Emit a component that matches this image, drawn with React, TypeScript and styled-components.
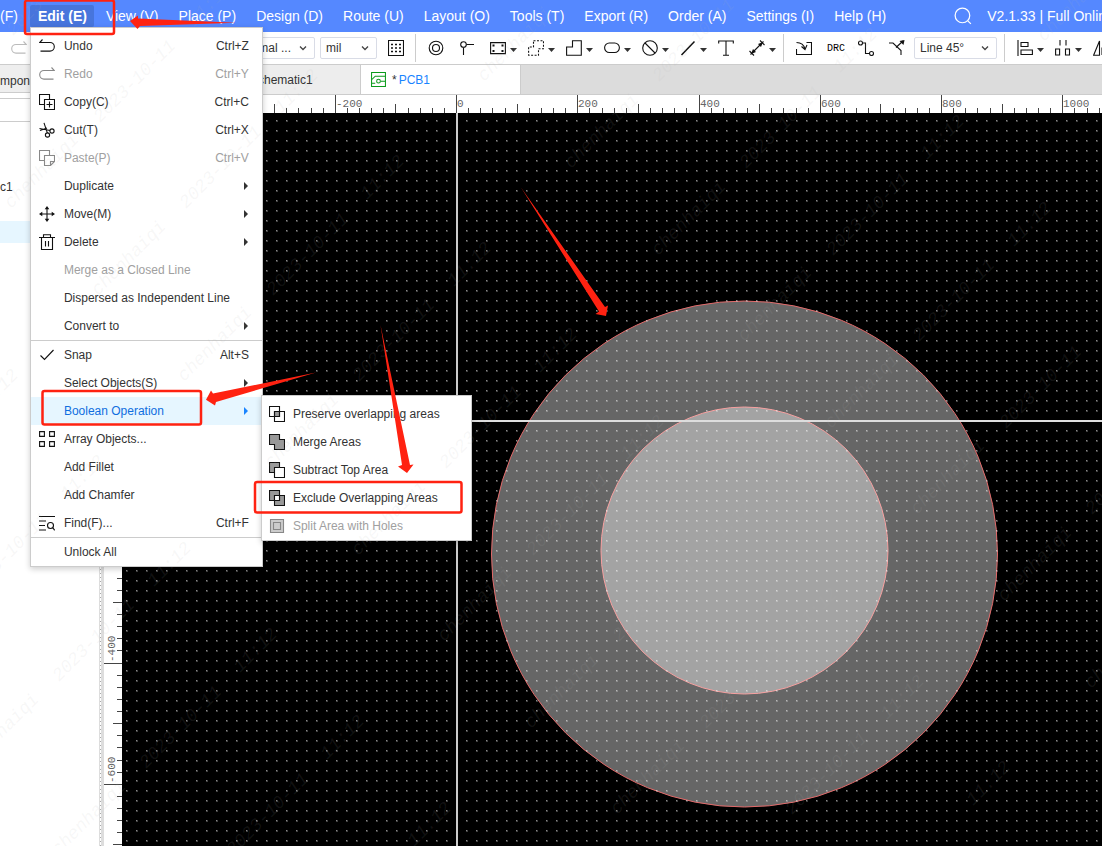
import React from 'react';
import styled, { createGlobalStyle } from 'styled-components';

const GlobalStyle = createGlobalStyle`
  * { box-sizing: border-box; }
  body {
    margin: 0;
    background: #fff;
    color: #333;
    font: 12px/16px "Liberation Sans", Arial, sans-serif;
  }
  button, select, input { font: inherit; color: inherit; }
  button { border: 0; background: none; padding: 0; cursor: pointer; }
  ul { list-style: none; margin: 0; padding: 0; }
`;

const RED = '#ff2211';

const Page = styled.div`
  position: relative;
  display: flex;
  flex-direction: column;
  height: 100vh;
  overflow: hidden;
`;

const Header = styled.header`
  display: flex;
  align-items: center;
  flex: none;
  height: 32px;
  background: #5588ff;
  color: #fff;
  font-size: 14px;
  white-space: nowrap;
`;

const MenuBar = styled.nav`
  display: flex;
  flex: none;
  gap: 4px;
`;

const MenuSlot = styled.div`
  position: relative;
  display: flex;
  align-items: center;
  height: 32px;
`;

const MenuButton = styled.button<{ $active?: boolean; $cut?: boolean }>`
  height: 22px;
  padding: 0 ${p => (p.$active ? '7px' : '8px')} 0 ${p => (p.$cut ? '0' : '8px')};
  border-radius: 2px;
  font-weight: ${p => (p.$active ? 700 : 400)};
  background: ${p => (p.$active ? '#4775dc' : 'transparent')};
`;

const HeaderInfo = styled.div`
  display: flex;
  align-items: center;
  gap: 15px;
  margin-left: 60px;
`;

const Toolbar = styled.div`
  display: flex;
  align-items: center;
  flex: none;
  height: 33px;
  border-bottom: 1px solid #ccc;
  background: #fff;
`;

const HistoryTools = styled.div`
  display: flex;
  flex: none;
  width: 232px;
  padding-left: 4px;
`;

const Tool = styled.button<{ $caret?: boolean }>`
  display: flex;
  align-items: center;
  flex: none;
  gap: 4px;
  height: 24px;
  width: ${p => (p.$caret ? '38px' : '31px')};
  padding-left: 7px;
`;

const Divider = styled.span`
  flex: none;
  width: 1px;
  height: 28px;
  margin: 0 5px 0 3px;
  background: #ccc;
`;

const SelectBox = styled.div<{ $width: number }>`
  display: flex;
  align-items: center;
  position: relative;
  flex: none;
  width: ${p => p.$width}px;
  margin: 0 4px 0 1px;
  svg { position: absolute; right: 8px; pointer-events: none; }
  select {
    width: 100%;
    height: 22px;
    padding: 0 5px;
    border: 1px solid #d9dce6;
    border-radius: 2px;
    background: #fff;
    appearance: none;
  }
`;

const Body = styled.div`
  display: flex;
  flex: 1;
  min-height: 0;
`;

const SidePanel = styled.aside`
  flex: none;
  width: 99px;
  overflow: hidden;
`;

const PanelTab = styled.button`
  display: block;
  width: 100%;
  height: 28px;
  padding-top: 4px;
  border-bottom: 1px solid #ccc;
  background: #eee;
  text-align: left;
`;

const PanelFilter = styled.input`
  display: block;
  width: 100%;
  height: 24px;
  margin: 5px 0 54px;
  border: solid #ccc;
  border-width: 1px 0;
  outline: 0;
`;

const TreeRow = styled.li<{ $selected?: boolean }>`
  height: 22px;
  margin-bottom: 23px;
  line-height: 22px;
  background: ${p => (p.$selected ? '#e6f6ff' : 'transparent')};
`;

const Splitter = styled.div`
  flex: none;
  width: 5px;
  background: #ddd;
  border-left: 1px solid #ddd;
  background-image: repeating-linear-gradient(#aaa 0 1px, #fff 1px 4px);
  background-size: 1px 100%;
  background-repeat: no-repeat;
`;

const Editor = styled.main`
  display: flex;
  flex-direction: column;
  flex: 1;
  min-width: 0;
`;

const TabBar = styled.div`
  display: flex;
  flex: none;
  height: 30px;
  padding-left: 97px;
  border-bottom: 1px solid #ccc;
  background: #dcdcdc;
`;

const Tab = styled.button<{ $active?: boolean }>`
  display: flex;
  align-items: center;
  gap: 6px;
  width: 160px;
  padding-left: 10px;
  border-right: 1px solid #ccc;
  background: ${p => (p.$active ? '#fff' : '#ededed')};
  em { margin-left: 2px; font-style: normal; color: #1a84ff; }
`;

const Board = styled.div`
  display: grid;
  grid-template: 18px 1fr / 18px 1fr;
  flex: 1;
  min-height: 0;
  background: #fff;
  svg { display: block; width: 100%; height: 100%; min-height: 0; overflow: hidden; }
  text { font: 11px "Liberation Mono", monospace; fill: #666; }
`;

const MenuPanel = styled.ul<{ $sub?: boolean }>`
  position: absolute;
  z-index: 2;
  left: ${p => (p.$sub ? '230px' : '0')};
  top: ${p => (p.$sub ? '-2px' : '27px')};
  width: ${p => (p.$sub ? '211px' : '233px')};
  padding: 4px 0 0;
  border: 1px solid #ccc;
  background: #fff;
  color: #333;
  font-size: 12px;
  font-weight: 400;
  box-shadow: 0 2px 6px rgba(0, 0, 0, 0.2);
`;

const MenuEntry = styled.li<{ $divided?: boolean }>`
  position: relative;
  border-top: ${p => (p.$divided ? '1px solid #ccc' : '0')};
`;

const MenuRow = styled.button<{ $muted?: boolean; $active?: boolean; $sub?: boolean }>`
  display: grid;
  grid-template-columns: 16px 1fr auto;
  align-items: center;
  column-gap: ${p => (p.$sub ? '8px' : '9px')};
  width: 100%;
  height: 28px;
  padding: 0 13px 0 ${p => (p.$sub ? '7px' : '8px')};
  text-align: left;
  white-space: nowrap;
  color: ${p => (p.$muted ? '#a0a0a0' : p.$active ? '#0f6ee0' : '#333')};
  background: ${p => (p.$active ? '#e6f6ff' : 'transparent')};
`;

const Overlay = styled.svg`
  position: absolute;
  z-index: 5;
  inset: 0;
  width: 100%;
  height: 100%;
  pointer-events: none;
`;

const Stamp = styled.text`
  font: italic 18px "Liberation Mono", monospace;
  fill: rgba(180, 180, 180, 0.1);
`;

/* ---------- icons ---------- */

function Icon({ children, color = '#111', size = 16 }: { children: React.ReactNode; color?: string; size?: number }) {
  return (
    <svg width={size} height={size} viewBox="0 0 16 16" fill="none" stroke={color} strokeWidth="1.1" aria-hidden="true">
      {children}
    </svg>
  );
}

const Caret = () => (
  <svg width="7" height="16" viewBox="0 0 7 16" aria-hidden="true"><path d="M0 8h7l-3.500 4z" fill="#333" /></svg>
);

const Chevron = () => (
  <svg width="8" height="8" viewBox="0 0 8 8" fill="none" stroke="#444" strokeWidth="1.300" aria-hidden="true"><path d="M1 2.500l3 3 3-3" /></svg>
);

const SubArrow = ({ active }: { active?: boolean }) => (
  <svg width="6" height="8" viewBox="0 0 6 8" aria-hidden="true"><path d="M1 0l4 4-4 4z" fill={active ? '#1a84ff' : '#333'} /></svg>
);

const icons: Record<string, React.ReactNode> = {
  undo: <path d="M3.500 1.500L.7 4.500H11a4.300 4.300 0 0 1 0 8.600H1.500" />,
  redo: <path d="M12.500 1.500l2.800 3H5a4.300 4.300 0 0 0 0 8.600h9.500" />,
  copy: <path d="M5 10.500H.5V.5h10V5M5.500 5.500h10v10h-10zM10.500 7.500v6M7.500 10.500h6" />,
  cut: <><path d="M.5 6.500l10.500 2M5 .8l3.400 10.400M1 8.500l7-2.500" /><circle cx="13" cy="9" r="2.100" /><circle cx="8.500" cy="13" r="2.100" /></>,
  paste: <path d="M5 10.500H.5V.5h10V5M5.500 5.500h10v6l-4 4h-6zM11.500 15v-3.500h3.500" />,
  move: <><path d="M8 2v12M2 8h12" /><path d="M8 0l2.300 3.300H5.700zM8 16l2.300-3.300H5.700zM0 8l3.300-2.300v4.600zM16 8l-3.300-2.300v4.600z" fill="#111" stroke="none" /></>,
  trash: <path d="M0 3.500h16M4.500 3V.7h7V3M2.500 3.500v12h11v-12M6.500 7v5.500M9.500 7v5.500" />,
  check: <path d="M1.500 8.500l4 4 9-9.500" />,
  array: <path d="M.6.6h4.800v4.800H.6zM10.600.6h4.800v4.800h-4.800zM.6 10.600h4.800v4.800H.6zM10.600 10.600h4.800v4.800h-4.800z" />,
  find: <><path d="M0 1.500h16M0 6h7M0 10.500h6M0 15h7" /><circle cx="11.500" cy="10.500" r="3" /><path d="M13.700 12.700l2 2.600" /></>,
  preserve: <><path d="M5.500 5.500h5v5h-5z" fill="#999" /><path d="M.5.5h10v10H.5zM5.500 5.500h10v10h-10z" /></>,
  merge: <path d="M.5.5h10v5h5v10h-10v-5h-5z" fill="#999" />,
  subtract: <><path d="M.5.5h10v10H.5z" fill="#999" /><path d="M5.500 5.500h10v10h-10z" fill="#fff" /></>,
  exclude: <><path d="M.5.5h10v10H.5zM5.500 5.500h10v10h-10z" fill="#999" /><path d="M5.500 5.500h5v5h-5z" fill="#fff" /></>,
  split: <><path d="M1.500 1.500h13v13h-13z" fill="#ccc" /><path d="M4.500 4.500h7v7h-7z" /></>,
  grid: <><path d="M.5.5h15v15H.5z" /><path d="M3 4.500h10M3 8h10M3 11.500h10" strokeWidth="1.500" strokeDasharray="2 2" /></>,
  pad: <><circle cx="8" cy="8" r="6.800" /><circle cx="8" cy="8" r="3.500" /></>,
  via: <><circle cx="4.500" cy="4.500" r="2.800" /><path d="M7.500 4.500H15M4.500 7.500V15" /></>,
  rect: <><path d="M.6 2.600h14.800v11H.6z" /><path d="M2.500 4.500h2v2h-2zM11.500 4.500h2v2h-2zM2.500 10h2v2h-2zM11.500 10h2v2h-2z" fill="#111" stroke="none" /></>,
  region: <path d="M5.500.7h10v8h-5v6.600H.6V7h4.900z" strokeDasharray="2 1.500" />,
  poly: <path d="M6.500.7h8.800v14.600H.6V7h5.900z" />,
  oval: <rect x=".6" y="3" width="14.800" height="9.500" rx="4.700" />,
  ban: <><circle cx="8" cy="8" r="7.300" /><path d="M3 3l10 10" /></>,
  line: <path d="M1.500 15L14.500 1.500" strokeWidth="1.500" />,
  text: <path d="M.7 3.500V1h14.600v2.500M8 1v14M5 15.300h6" />,
  measure: <><path d="M1.500 14.500l13-13M11 .5l4.500 4.500M.5 11l4.500 4.500" /><path d="M14 2l-5 2 3 3zM2 14l5-2-3-3z" fill="#111" stroke="none" /></>,
  importIcon: <><path d="M10.500 2.500h5v12H.5V9" /><path d="M.5 2.500c5 0 7.500 2.500 8.500 6.500M5.500 6.500L9 9.500l2-4.500" /></>,
  route: <><circle cx="2.500" cy="3" r="2" /><circle cx="13.500" cy="13.500" r="2" /><path d="M4.500 3h3v10.500h4" /></>,
  fanout: <><path d="M0 3h4l8 7.500V15M7 7.500L14 1" /><path d="M15.500 0l-1 5-4-4z" fill="#111" stroke="none" /></>,
  alignLeft: <path d="M1 0v16M4 2.500h7v4H4zM4 10h11.400v4.500H4z" />,
  distribute: <path d="M5 0v5.500M11 0v5.500M.6 9h4v6H.6zM10.500 9h4v6h-4z" />,
  mirror: <path d="M6.500 1v14.300H.6zM9 15V8h5" />,
};

function ToolIcon({ name, label, caret, color }: { name: string; label: string; caret?: boolean; color?: string }) {
  return (
    <Tool $caret={caret} aria-label={label}>
      <Icon color={color}>{icons[name]}</Icon>
      {caret && <Caret />}
    </Tool>
  );
}

const DrcLabel = styled.span`
  font: 10px "Liberation Mono", monospace;
  color: #000;
`;

function Choice({ label, value, width }: { label: string; value: string; width: number }) {
  return (
    <SelectBox $width={width}>
      <select aria-label={label} defaultValue={value}><option>{value}</option></select>
      <Chevron />
    </SelectBox>
  );
}

/* ---------- menus ---------- */

type Item = {
  label: string;
  icon?: string;
  keys?: string;
  sub?: boolean;
  muted?: boolean;
  active?: boolean;
  divided?: boolean;
};

const editItems: Item[] = [
  { label: 'Undo', icon: 'undo', keys: 'Ctrl+Z' },
  { label: 'Redo', icon: 'redo', keys: 'Ctrl+Y', muted: true },
  { label: 'Copy(C)', icon: 'copy', keys: 'Ctrl+C' },
  { label: 'Cut(T)', icon: 'cut', keys: 'Ctrl+X' },
  { label: 'Paste(P)', icon: 'paste', keys: 'Ctrl+V', muted: true },
  { label: 'Duplicate', sub: true },
  { label: 'Move(M)', icon: 'move', sub: true },
  { label: 'Delete', icon: 'trash', sub: true },
  { label: 'Merge as a Closed Line', muted: true },
  { label: 'Dispersed as Independent Line' },
  { label: 'Convert to', sub: true },
  { label: 'Snap', icon: 'check', keys: 'Alt+S', divided: true },
  { label: 'Select Objects(S)', sub: true },
  { label: 'Boolean Operation', sub: true, active: true },
  { label: 'Array Objects...', icon: 'array' },
  { label: 'Add Fillet' },
  { label: 'Add Chamfer' },
  { label: 'Find(F)...', icon: 'find', keys: 'Ctrl+F' },
  { label: 'Unlock All', divided: true },
];

const booleanItems: Item[] = [
  { label: 'Preserve overlapping areas', icon: 'preserve' },
  { label: 'Merge Areas', icon: 'merge' },
  { label: 'Subtract Top Area', icon: 'subtract' },
  { label: 'Exclude Overlapping Areas', icon: 'exclude' },
  { label: 'Split Area with Holes', icon: 'split', muted: true },
];

function Menu({ items, sub }: { items: Item[]; sub?: boolean }) {
  return (
    <MenuPanel $sub={sub}>
      {items.map(item => (
        <MenuEntry key={item.label} $divided={item.divided}>
          <MenuRow $muted={item.muted} $active={item.active} $sub={sub} disabled={item.muted}>
            {item.icon ? <Icon color={item.muted ? '#888' : '#111'}>{icons[item.icon]}</Icon> : <span />}
            <span>{item.label}</span>
            {item.keys && <span>{item.keys}</span>}
            {item.sub && <SubArrow active={item.active} />}
          </MenuRow>
          {item.active && <Menu items={booleanItems} sub />}
        </MenuEntry>
      ))}
    </MenuPanel>
  );
}

const topMenus = ['View (V)', 'Place (P)', 'Design (D)', 'Route (U)', 'Layout (O)', 'Tools (T)', 'Export (R)', 'Order (A)', 'Settings (I)', 'Help (H)'];

/* ---------- board ---------- */

const ORIGIN_X = 334;
const ORIGIN_Y = 307;
const STEP = 12.125;

const ticks = (from: number, to: number) => Array.from({ length: Math.max(0, to - from + 1) }, (_, i) => from + i);

const tickSize = (i: number) => (i % 10 === 0 ? 18 : i % 5 === 0 ? 9 : 5);

function TopRuler() {
  const last = Math.floor((window.innerWidth - 122 - ORIGIN_X) / STEP);
  return (
    <svg>
      {ticks(-19, last).map(i => {
        const x = Math.round(ORIGIN_X + i * STEP);
        const h = tickSize(i);
        return (
          <g key={i}>
            <rect x={x} y={18 - h} width="1" height={h} fill="#444" />
            {i % 10 === 0 && <text x={x + 1} y="12">{i * 20}</text>}
          </g>
        );
      })}
    </svg>
  );
}

function SideRuler() {
  const last = Math.floor((window.innerHeight - 113 - ORIGIN_Y) / STEP);
  return (
    <svg>
      {ticks(12, last).map(i => {
        const y = Math.round(ORIGIN_Y + i * STEP);
        const w = tickSize(i);
        return (
          <g key={i}>
            <rect x={18 - w} y={y} width={w} height="1" fill="#444" />
            {i % 10 === 0 && <text transform={`translate(11 ${y - 1}) rotate(-90)`}>{-i * 20}</text>}
          </g>
        );
      })}
    </svg>
  );
}

function Canvas() {
  return (
    <svg role="img" aria-label="Board with two concentric filled areas">
      <defs>
        <pattern id="dots" x="4" y="7" width="10" height="10" patternUnits="userSpaceOnUse">
          <rect width="2" height="2" fill="#fff" opacity="0.250" />
          <rect width="1" height="1" fill="#fff" opacity="0.400" />
        </pattern>
      </defs>
      <rect width="100%" height="100%" fill="#000" />
      <circle cx="622.500" cy="441" r="253" fill="#666" stroke="#e26a6a" />
      <circle cx="622.500" cy="437.500" r="143.500" fill="#a3a3a3" stroke="#f7a0a0" />
      <rect width="100%" height="100%" fill="url(#dots)" />
      <rect x={ORIGIN_X} width="2" height="100%" fill="#ccc" />
      <rect y={ORIGIN_Y} width="100%" height="2" fill="#ddd" />
    </svg>
  );
}

/* ---------- overlays ---------- */

const stampWords = [
  { text: 'chenhaiqi', dx: 0, dy: 0 },
  { text: '2023-10-11', dx: 175, dy: 0 },
  { text: '11:12', dx: 356, dy: -9 },
];

function Watermark() {
  const cells = ticks(-4, 3).flatMap(row => ticks(-12, 14).map(col => ({ row, col })));
  return (
    <Overlay aria-hidden="true">
      {cells.flatMap(({ row, col }) =>
        stampWords.map(word => {
          const x = Math.round(571 + col * 86.6 + row * 300 + word.dx);
          const y = Math.round(169 + col * 86.6 - row * 300 + word.dy);
          if (x < -50 || y < 10 || x > window.innerWidth - 10 || y > window.innerHeight + 50) return null;
          return (
            <Stamp key={`${row}/${col}/${word.text}`} transform={`translate(${x} ${y}) rotate(-45)`}>{word.text}</Stamp>
          );
        }),
      )}
    </Overlay>
  );
}

function Annotations() {
  return (
    <Overlay aria-hidden="true">
      <g fill="none" stroke={RED} strokeWidth="2.500">
        <rect x="25" y="0.500" width="89" height="33.500" rx="2" />
        <rect x="42.500" y="391" width="158.500" height="33.500" rx="2" />
        <rect x="255" y="482" width="206.500" height="30.500" rx="2" />
      </g>
      <g fill={RED}>
        <path d="M130 21L138 15.500V18.500L236 22.700L140 26L137.500 29Z" />
        <path d="M206 399.700L211 390.500L213 393.500L316 372.500L216 402L215 405.500Z" />
        <path d="M380.500 325L410 465L413.500 464.500L407 473L398 466.500L402 465Z" />
        <path d="M521 187.500L605 307L608 305.500L606 316L595.500 314L599 311.500Z" />
      </g>
    </Overlay>
  );
}

export default function App() {
  return (
    <Page>
      <GlobalStyle />
      <Header>
        <MenuBar aria-label="Main menu">
          <MenuSlot><MenuButton $cut>(F)</MenuButton></MenuSlot>
          <MenuSlot>
            <MenuButton $active>Edit (E)</MenuButton>
            <Menu items={editItems} />
          </MenuSlot>
          {topMenus.map(name => (
            <MenuSlot key={name}><MenuButton>{name}</MenuButton></MenuSlot>
          ))}
        </MenuBar>
        <HeaderInfo>
          <Icon color="#fff" size={18}><circle cx="7.500" cy="7.500" r="6.500" /><path d="M12.300 12.300l2.700 2.700" /></Icon>
          <span>V2.1.33 | Full Online</span>
        </HeaderInfo>
      </Header>
      <Toolbar>
        <HistoryTools><ToolIcon name="redo" label="Redo" color="#bbb" /></HistoryTools>
        <Choice label="Display mode" value="Normal ..." width={82} />
        <Choice label="Unit" value="mil" width={57} />
        <ToolIcon name="grid" label="Grid" />
        <Divider />
        <ToolIcon name="pad" label="Pad" />
        <ToolIcon name="via" label="Via" />
        <ToolIcon name="rect" label="Rectangle" caret />
        <ToolIcon name="region" label="Region" caret />
        <ToolIcon name="poly" label="Polygon" caret />
        <ToolIcon name="oval" label="Slot" caret />
        <ToolIcon name="ban" label="Keepout" caret />
        <ToolIcon name="line" label="Line" caret />
        <ToolIcon name="text" label="Text" />
        <ToolIcon name="measure" label="Dimension" caret />
        <Divider />
        <ToolIcon name="importIcon" label="Import changes" />
        <Tool><DrcLabel>DRC</DrcLabel></Tool>
        <ToolIcon name="route" label="Route" />
        <ToolIcon name="fanout" label="Fanout" />
        <Choice label="Routing corner" value="Line 45°" width={83} />
        <Divider />
        <ToolIcon name="alignLeft" label="Align" caret />
        <ToolIcon name="distribute" label="Distribute" caret />
        <ToolIcon name="mirror" label="Mirror" />
      </Toolbar>
      <Body>
        <SidePanel>
          <PanelTab>mpone</PanelTab>
          <PanelFilter aria-label="Filter" />
          <ul>
            <TreeRow>c1</TreeRow>
            <TreeRow $selected />
          </ul>
        </SidePanel>
        <Splitter />
        <Editor>
          <TabBar>
            <Tab>
              <Icon color="#2a7de1" size={15}><path d="M1 1h14v14H1z" /></Icon>
              <span>P1.Schematic1</span>
            </Tab>
            <Tab $active>
              <Icon color="#0a9a1a" size={15}>
                <path d="M.6.6h14.800v14.800H.6zM1 8l3.500-3.500H15M1 12h3.500M10.500 9.800H15" />
                <circle cx="8" cy="9.800" r="2" />
              </Icon>
              <span>*<em>PCB1</em></span>
            </Tab>
          </TabBar>
          <Board>
            <span />
            <TopRuler />
            <SideRuler />
            <Canvas />
          </Board>
        </Editor>
      </Body>
      <Watermark />
      <Annotations />
    </Page>
  );
}
